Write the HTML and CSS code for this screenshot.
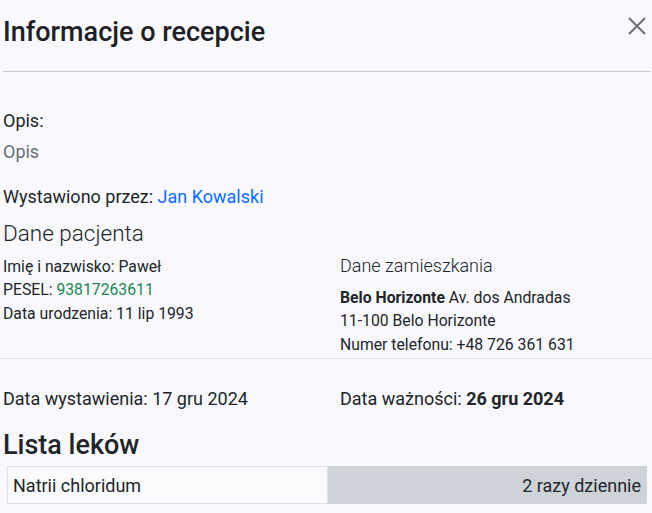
FILE: index.html
```html
<!DOCTYPE html>
<html lang="pl">
<head>
<meta charset="utf-8">
<title>Informacje o recepcie</title>
<link rel="stylesheet" href="styles.css">
</head>
<body>
<div class="modal">
  <header class="modal-header">
    <h1 class="modal-title">Informacje o recepcie</h1>
    <button class="close" aria-label="Zamknij">
      <svg width="20" height="20" viewBox="0 0 20 20"><path d="M2 2 L18 18 M18 2 L2 18" stroke="#6e6e72" stroke-width="2" fill="none"/></svg>
    </button>
  </header>
  <section class="content">
    <p class="label first">Opis:</p>
    <p class="muted">Opis</p>
    <p class="issuer">Wystawiono przez: <a class="link" href="#">Jan Kowalski</a></p>
    <h2 class="section-title">Dane pacjenta</h2>
    <div class="patient">
      <div class="col-left">
        <div class="row">Imię i nazwisko: Paweł</div>
        <div class="row">PESEL: <span class="green">93817263611</span></div>
        <div class="row">Data urodzenia: 11 lip 1993</div>
      </div>
      <div class="col-right">
        <h3 class="sub-title">Dane zamieszkania</h3>
        <div class="row"><b>Belo Horizonte</b> Av. dos Andradas</div>
        <div class="row">11-100 Belo Horizonte</div>
        <div class="row">Numer telefonu: +48 726 361 631</div>
      </div>
    </div>
  </section>
  <hr class="divider">
  <section class="content">
    <div class="dates">
      <div class="date-left">Data wystawienia: 17 gru 2024</div>
      <div class="date-right">Data ważności: <b>26 gru 2024</b></div>
    </div>
    <h2 class="list-title">Lista leków</h2>
    <table class="drugs">
      <tr>
        <td class="drug-name">Natrii chloridum</td>
        <td class="drug-dose">2 razy dziennie</td>
      </tr>
    </table>
  </section>
</div>
</body>
</html>
```
FILE: styles.css
```css
html, body {
  margin: 0;
  padding: 0;
  background: #f9f9fd;
}
body {
  font-family: Roboto, "Liberation Sans", sans-serif;
  color: #212529;
  font-size: 18px;
  line-height: 27px;
  width: 652px;
  height: 513px;
  overflow: hidden;
}
.modal {
  position: relative;
}
.modal-header {
  margin: 0 2px 0 3px;
  height: 72px;
  box-sizing: border-box;
  border-bottom: 1px solid #c9c9cd;
}
.modal-title {
  margin: 0;
  padding-top: 15px;
  font-size: 27px;
  line-height: 34px;
  font-weight: 500;
  color: #1d2126;
}
.close {
  position: absolute;
  top: 16px;
  right: 5px;
  border: 0;
  background: transparent;
  padding: 0;
  width: 20px;
  height: 20px;
}
.content {
  padding: 0 3px;
}
.label, .muted, .issuer {
  margin: 0;
}
.first {
  padding-top: 35px;
}
.muted {
  margin-top: 4px;
  color: #686f76;
}
.issuer {
  margin-top: 18px;
}
.link {
  color: #0d6efd;
  text-decoration: none;
}
.section-title {
  margin: 9.5px 0 0;
  font-size: 22.5px;
  line-height: 26px;
  font-weight: 300;
}
.patient {
  display: grid;
  grid-template-columns: 337px 1fr;
  margin-top: 6.5px;
  font-size: 15.75px;
}
.row {
  line-height: 23.5px;
}
.col-left {
  padding-top: 2.75px;
}
.sub-title {
  margin: 0 0 6.75px;
  font-size: 18px;
  line-height: 27px;
  font-weight: 300;
}
.green {
  color: #198754;
}
.divider {
  margin: 1.25px 0 0;
  border: 0;
  border-top: 1px solid #dee2e6;
  height: 0;
}
.dates {
  display: grid;
  grid-template-columns: 337px 1fr;
  margin-top: 26px;
}
.list-title {
  margin: 17.5px 0 0;
  font-size: 27px;
  line-height: 32px;
  font-weight: 500;
}
.drugs {
  margin: 5px 0 0 4px;
  width: 640px;
  border-collapse: collapse;
  table-layout: fixed;
}
.drugs td {
  height: 36px;
  padding: 0 5px;
  border: 1px solid #dee2e6;
  font-size: 18px;
}
.drug-name {
  background: #fbfbfe;
}
.drug-dose {
  background: #ced3d9;
  border-color: #ced3d9 !important;
  text-align: right;
}
```
